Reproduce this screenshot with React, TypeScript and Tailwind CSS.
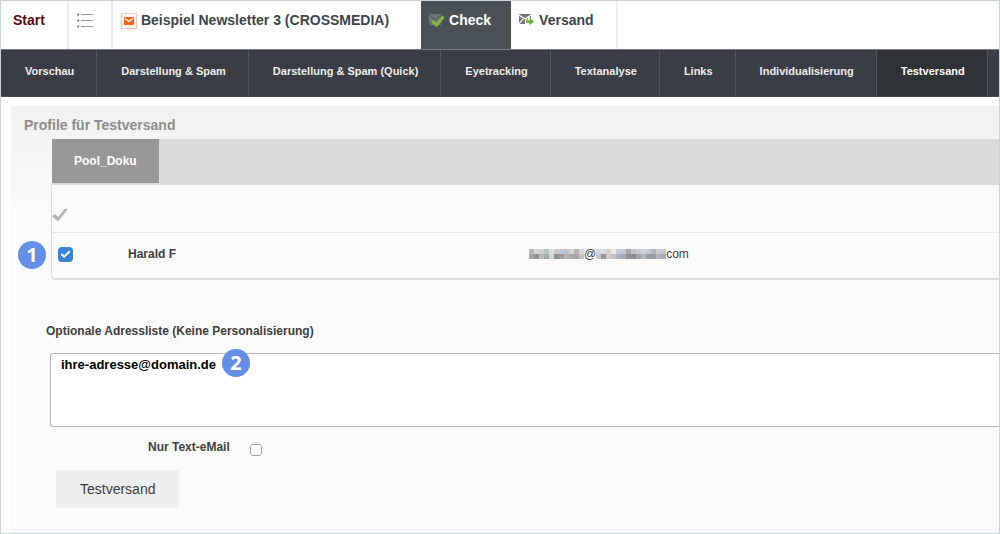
import { Check } from "lucide-react";

const subNav = [
  "Vorschau",
  "Darstellung & Spam",
  "Darstellung & Spam (Quick)",
  "Eyetracking",
  "Textanalyse",
  "Links",
  "Individualisierung",
  "Testversand"
];

const maskedUser = [
  ["#b9b3b2", "#d3d4d6", "#cfd0d2", "#b9c0c0", "#dcdde0", "#c9c8c9", "#c4c8cc", "#bfc3c7", "#d6d2d0", "#b3b2b9", "#d4d5d6"],
  ["#aaa2a0", "#8f8f93", "#b9babd", "#a2abab", "#d5d5d8", "#8f8c8f", "#a09a9e", "#b8b3b0", "#a8a7aa", "#a7a5ab", "#c2c3c6"]
];

const maskedDomain = [
  ["#d5d7da", "#dcdcde", "#d0d1d3", "#f0e5de", "#c6cbd6", "#c9c9cc", "#a9a5ae", "#c3c4ca", "#c8cacc", "#d0d1d3", "#c3cace", "#b2b7c1", "#c9cbcf", "#c6c9d0"],
  ["#c5c8cc", "#99979b", "#c9cacd", "#cbbab2", "#aab1c4", "#a6a6ac", "#938e97", "#8f8b8f", "#a5a3a6", "#b6b5b8", "#9b9da1", "#93a0ab", "#b2b3b9", "#a7abb6"]
];

function Mosaic({ rows, label }: { rows: string[][]; label: string }) {
  const width = rows[0].length * 5;
  return (
    <svg width={width} height="10" viewBox={`0 0 ${width} 10`} shapeRendering="crispEdges" role="img" aria-label={label}>
      {rows.map((row, y) => row.map((color, x) => <rect key={`${x}-${y}`} x={x * 5} y={y * 5} width="5" height="5" fill={color} />))}
    </svg>
  );
}

function ListIcon() {
  return (
    <svg width="16" height="15" viewBox="0 0 16 15" className="block">
      {[1, 7, 13].map((y) => (
        <g key={y}>
          <circle cx="1.2" cy={y + 0.5} r="1" fill="#5e5e5e" />
          <path d={`M4 ${y + 0.5}h12`} stroke="#999999" strokeWidth="1" />
        </g>
      ))}
    </svg>
  );
}

function NewsletterIcon() {
  return (
    <svg width="16" height="16" viewBox="0 0 16 16" className="shrink-0">
      <rect x="0.5" y="0.5" width="15" height="15" fill="#fffaf7" stroke="#f9c9af" />
      <rect x="3" y="4" width="10" height="8" rx="0.8" fill="#f2611c" />
      <path d="M4 5.500l4 3 4-3" fill="none" stroke="#fff" strokeWidth="1.300" />
    </svg>
  );
}

function MailCheckIcon() {
  return (
    <svg width="16" height="15" viewBox="0 0 16 15" className="shrink-0">
      <path d="M0 1h13v11H0z" fill="#737676" />
      <path d="M0 2l6.500 5L13 2M0 12l4.500-5M13 12L9 7" fill="none" stroke="#4a5258" strokeWidth="1" />
      <path d="M3 8l4.500 4L14.500 3.500" fill="none" stroke="#7aba42" strokeWidth="3" />
    </svg>
  );
}

function MailSendIcon() {
  return (
    <svg width="16" height="13" viewBox="0 0 16 13" className="shrink-0">
      <path d="M0 1h12v10H0z" fill="#747777" />
      <path d="M0 2l6 4 6-4M0 11l4-5" fill="none" stroke="#fff" strokeWidth="1.200" />
      <path d="M6 6.500h3V3l7 5.500-6 4.500H6z" fill="#fff" />
      <path d="M7 7.300h3.500V4.500L15 8.500l-4.500 3.800V10H7z" fill="#6fb243" />
    </svg>
  );
}

function Step({ children }: { children: string }) {
  return (
    <span className="flex size-7 items-center justify-center rounded-full bg-[#648fe5] font-['Noto_Sans',sans-serif] text-xl leading-7 font-bold text-white">
      {children}
    </span>
  );
}

export default function App() {
  return (
    <div className="flex min-h-screen flex-col overflow-hidden border border-[#c8d3da] bg-white font-['Liberation_Sans',Arial,sans-serif] text-[13px] text-[#404040]">
      <nav className="flex h-12 text-sm leading-5 font-bold text-[#3d464c]">
        <a href="#start" className="border-r-2 border-[#e8eaec] pt-[9px] pr-[22px] pl-3 text-[#560b0b]">Start</a>
        <a href="#liste" aria-label="Liste" className="border-r-2 border-[#e8eaec] pt-3 pr-[18px] pl-2">
          <ListIcon />
        </a>
        <a href="#newsletter" className="flex items-start gap-1 pt-[9px] pr-8 pl-2">
          <span className="pt-[3px]"><NewsletterIcon /></span>
          Beispiel Newsletter 3 (CROSSMEDIA)
        </a>
        <a href="#check" className="flex items-start gap-1 bg-[#4a5258] pt-[9px] pr-5 pl-2 text-white">
          <span className="pt-[3px]"><MailCheckIcon /></span>
          Check
        </a>
        <a href="#versand" className="flex items-start gap-1 border-r-2 border-[#eeeff0] pt-[9px] pr-[22px] pl-2">
          <span className="pt-[3px]"><MailSendIcon /></span>
          Versand
        </a>
      </nav>

      <nav className="flex h-12 border-t border-b border-t-[#777a7f] border-b-[#484c53] bg-[#3a3d45] text-[11px] leading-4 font-bold text-[#eeeeee]">
        {subNav.map((item) => (
          <a
            key={item}
            href="#bereich"
            className={`shrink-0 border-r border-[#4c555d] pt-[13px] pr-[22px] pl-6 ${item === "Testversand" ? "bg-[#2f3237] text-white" : ""}`}
          >
            {item}
          </a>
        ))}
      </nav>

      <main className="mt-[9px] ml-[10px] grow bg-[#fafafa] bg-linear-to-b from-[#f1f1f1] to-[#fafafa] to-25%">
        <h1 className="pt-[9px] pl-[13px] text-sm leading-5 font-bold text-[#8d8d8d]">Profile für Testversand</h1>

        <section className="mt-1 ml-10">
          <div className="ml-px flex bg-[#dbdbdb] pb-0.5">
            <button type="button" className="h-11 bg-[#979797] px-[22px] text-xs font-bold text-white">Pool_Doku</button>
          </div>
          <table className="w-full border-separate border-spacing-0 rounded-bl border-b-2 border-l border-[#dedede] bg-[#fafafa] text-left">
            <thead>
              <tr className="h-12">
                <th colSpan={3} className="border-b border-[#e8e8e8] pt-3">
                  <svg width="16" height="14" viewBox="0 0 16 14" role="img" aria-label="Alle auswählen">
                    <path d="M0 8l3-2 3 3 6.500-8H16L6 13.500z" fill="#b5b5b5" />
                  </svg>
                </th>
              </tr>
            </thead>
            <tbody>
              <tr className="h-[45px]">
                <td className="relative w-[76px] pl-[6px] align-top">
                  <div className="absolute top-2 -left-[34px]"><Step>1</Step></div>
                  <div className="relative mt-[14px] size-[15px]">
                    <input id="harald" type="checkbox" defaultChecked className="block size-[15px] appearance-none rounded bg-[#3d84d2]" />
                    <Check className="pointer-events-none absolute top-0.5 left-0.5 size-[11px] text-white" strokeWidth={4} />
                  </div>
                </td>
                <td className="w-[401px] pb-1 text-xs font-bold">
                  <label htmlFor="harald">Harald F</label>
                </td>
                <td className="pb-1">
                  <div className="flex items-center text-xs leading-4">
                    <Mosaic rows={maskedUser} label="Benutzer verborgen" />
                    @
                    <Mosaic rows={maskedDomain} label="Domain verborgen" />
                    com
                  </div>
                </td>
              </tr>
            </tbody>
          </table>
        </section>

        <form className="mt-[43px] ml-[35px]">
          <label htmlFor="adressliste" className="block text-xs leading-4 font-bold">Optionale Adressliste (Keine Personalisierung)</label>
          <div className="relative mt-[14px] ml-1">
            <textarea
              id="adressliste"
              defaultValue="ihre-adresse@domain.de"
              className="block h-[74px] w-full resize-none rounded-l-[3px] border border-r-0 border-[#b7b7b7] bg-white px-[10px] py-[3px] text-[13px] leading-4 font-bold text-black"
            />
            <div className="absolute -top-1 left-[172px]"><Step>2</Step></div>
          </div>
          <div className="mt-3 ml-[102px] flex items-start gap-5">
            <label htmlFor="nurtext" className="text-xs leading-4 font-bold">Nur Text-eMail</label>
            <input id="nurtext" type="checkbox" className="mt-[5px] size-3 appearance-none rounded-[3px] border border-[#a5a5a5] bg-white" />
          </div>
          <button type="button" className="mt-[14px] ml-[10px] h-[38px] rounded-xs bg-[#eeeeee] px-6 text-sm">Testversand</button>
        </form>
      </main>
    </div>
  );
}
